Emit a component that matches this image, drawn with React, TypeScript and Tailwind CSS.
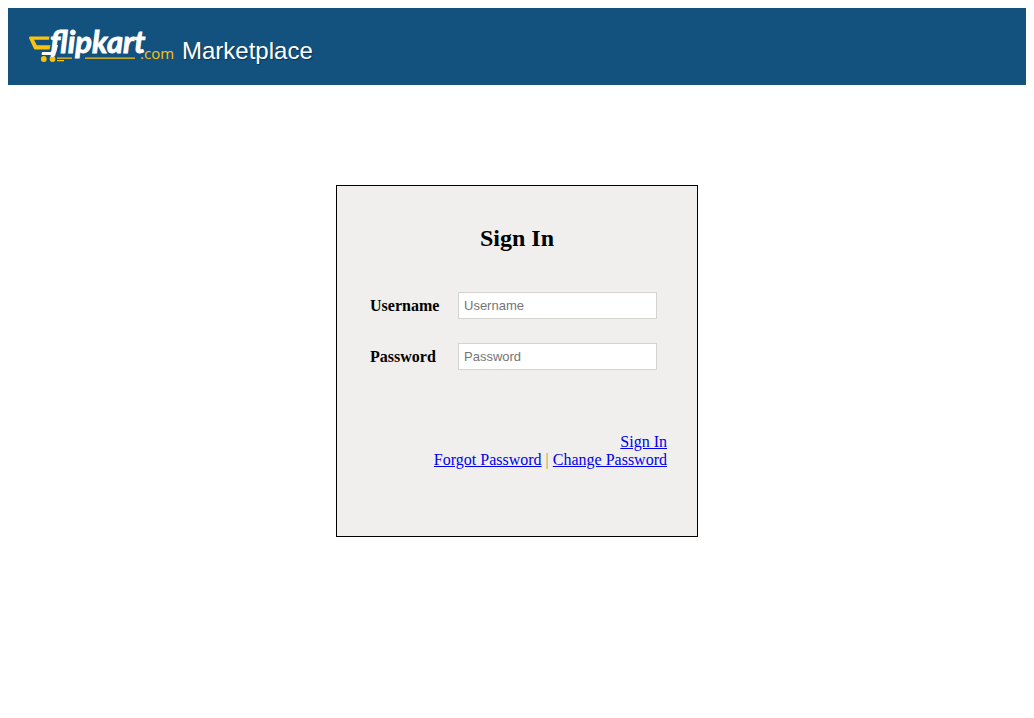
function FlipkartLogo() {
  return (
    <svg width="146" height="48" viewBox="0 0 146 48" className="overflow-visible" role="img" aria-label="flipkart.com">
      <path
        d="M2 9.6H21.5L21 12.8H6L8.8 18.2H22.5L21.5 22.4H7.4Q6.3 22.4 5.7 21.2L1.2 11.6Q.7 9.6 2 9.6Z"
        fill="#fdc30b"
      />
      <path d="M14.5 25H22Q24 25 24.5 23L25.5 18H30L28.5 24Q27.3 28 23.5 28H14.5Q13.6 28 13.6 26.5Q13.6 25 14.5 25Z" fill="#ffffff" />
      <circle cx="15.8" cy="32" r="2.9" fill="#fdc30b" />
      <circle cx="24.5" cy="32" r="2.9" fill="#fdc30b" />
      <path d="M29 30.6H44V31.8H29ZM29 33H36V34.2H29ZM57 30.6H107V31.8H57Z" fill="#fdc30b" />
      <text
        x="22"
        y="26"
        fill="#ffffff"
        stroke="#ffffff"
        strokeWidth="0.9"
        className="font-[Lato,sans-serif] text-[31px] leading-none font-bold italic"
      >
        flipkart
      </text>
      <text x="112" y="32" fill="#fdc30b" className="font-['Open_Sans',sans-serif] text-[15px] leading-none">
        .com
      </text>
    </svg>
  );
}

function Field({ id, label, type }: { id: string; label: string; type: string }) {
  return (
    <div className="flex items-center">
      <label htmlFor={id} className="w-[88px] shrink-0 font-bold">
        {label}
      </label>
      <input
        id={id}
        name={id}
        type={type}
        placeholder={label}
        className="h-[27px] min-w-0 flex-1 border border-[#d3d3cf] bg-white px-[5px] font-['Liberation_Sans',Arial,sans-serif] text-[13px] text-black placeholder:text-[#757575]"
      />
    </div>
  );
}

export default function App() {
  return (
    <div className="p-2 font-['Liberation_Serif','Times_New_Roman',serif] text-base leading-[18px] text-black">
      <header className="flex h-[77px] items-start bg-[#13517f] pt-[19px] pl-5">
        <FlipkartLogo />
        <span className="pt-2 pl-2 font-['Liberation_Sans',Arial,sans-serif] text-2xl text-white [text-shadow:1px_1px_1px_rgba(0,0,0,0.4)]">
          Marketplace
        </span>
      </header>
      <main className="mx-auto mt-[100px] w-[362px] max-w-full border border-black bg-[#f0efed] px-[30px] pt-9 pb-[67px]">
        <form>
          <h1 className="text-center text-2xl font-bold">Sign In</h1>
          <div className="mt-[38px] flex flex-col gap-6 pr-[10px] pl-[3px]">
            <Field id="username" label="Username" type="text" />
            <Field id="password" label="Password" type="password" />
          </div>
          <div className="mt-[63px] text-right">
            <a href="#signin" className="text-[#0000ee] underline">
              Sign In
            </a>
            <div className="text-[#c98a35]">
              <a href="#forgot" className="text-[#0000ee] underline">
                Forgot Password
              </a>
              {" | "}
              <a href="#change" className="text-[#0000ee] underline">
                Change Password
              </a>
            </div>
          </div>
        </form>
      </main>
    </div>
  );
}
